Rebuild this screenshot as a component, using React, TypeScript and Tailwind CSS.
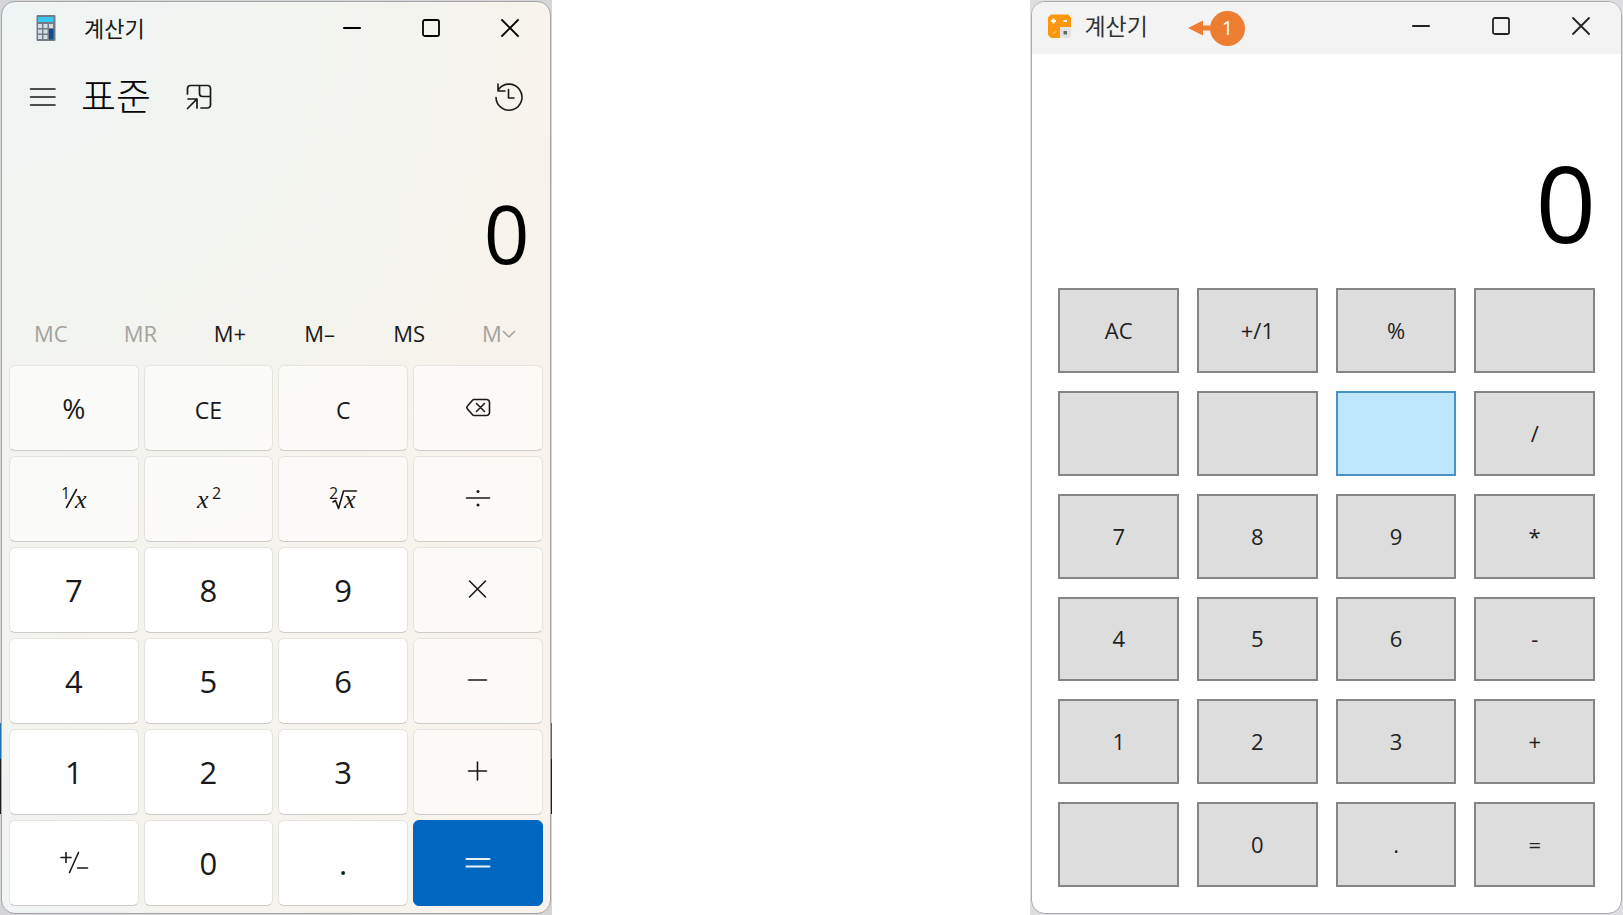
import type { ReactNode } from 'react';
import { clsx } from 'clsx';

interface Key {
  id: string;
  label: ReactNode;
  kind: 'number' | 'letter' | 'percent' | 'operator' | 'equals';
}

const stroke = {
  fill: 'none',
  stroke: 'currentColor',
  strokeWidth: 1.6,
  strokeLinecap: 'round',
  strokeLinejoin: 'round',
} as const;

function Glyph({ children }: { children: ReactNode }) {
  return (
    <svg viewBox="0 0 30 30" className="h-[30px] w-[30px] overflow-visible" aria-hidden="true" {...stroke}>
      {children}
    </svg>
  );
}

const digitClass = "fill-current stroke-none font-['Open_Sans',sans-serif] text-[16px]";
const variableClass = "fill-current stroke-none font-['Liberation_Serif',serif] text-[26px] italic";

const standardKeys: Key[] = [
  { id: 'percent', label: '%', kind: 'percent' },
  { id: 'clear-entry', label: 'CE', kind: 'letter' },
  { id: 'clear', label: 'C', kind: 'letter' },
  {
    id: 'backspace',
    kind: 'operator',
    label: (
      <Glyph>
        <path d="M11 6.500h12.500a3 3 0 0 1 3 3v10a3 3 0 0 1-3 3H11a2 2 0 0 1-1.500-.7L4.300 15.700a1.800 1.800 0 0 1 0-2.400L9.500 7.200A2 2 0 0 1 11 6.500zM13.500 10.500l8 8M21.500 10.500l-8 8" />
      </Glyph>
    ),
  },
  {
    id: 'reciprocal',
    kind: 'operator',
    label: (
      <Glyph>
        <text x="2" y="15" className={digitClass}>1</text>
        <path d="M7.500 23.500L17.500 5.500" />
        <text x="16" y="24" className={variableClass}>x</text>
      </Glyph>
    ),
  },
  {
    id: 'square',
    kind: 'operator',
    label: (
      <Glyph>
        <text x="4" y="24" className={variableClass}>x</text>
        <text x="19" y="15" className={digitClass}>2</text>
      </Glyph>
    ),
  },
  {
    id: 'square-root',
    kind: 'operator',
    label: (
      <Glyph>
        <text x="1" y="15" className={digitClass}>2</text>
        <path d="M5 18l2.500-1.500L10.500 24.500L15.500 7H28.500" />
        <text x="16" y="24" className={variableClass}>x</text>
      </Glyph>
    ),
  },
  {
    id: 'divide',
    kind: 'operator',
    label: (
      <Glyph>
        <path d="M3.500 14h23" />
        <circle cx="15" cy="7.500" r="1.500" fill="currentColor" stroke="none" />
        <circle cx="15" cy="21" r="1.500" fill="currentColor" stroke="none" />
      </Glyph>
    ),
  },
  { id: '7', label: '7', kind: 'number' },
  { id: '8', label: '8', kind: 'number' },
  { id: '9', label: '9', kind: 'number' },
  {
    id: 'multiply',
    kind: 'operator',
    label: <Glyph><path d="M6.500 6l16 16M22.500 6l-16 16" /></Glyph>,
  },
  { id: '4', label: '4', kind: 'number' },
  { id: '5', label: '5', kind: 'number' },
  { id: '6', label: '6', kind: 'number' },
  {
    id: 'minus',
    kind: 'operator',
    label: <Glyph><path d="M5.500 14h18" /></Glyph>,
  },
  { id: '1', label: '1', kind: 'number' },
  { id: '2', label: '2', kind: 'number' },
  { id: '3', label: '3', kind: 'number' },
  {
    id: 'plus',
    kind: 'operator',
    label: <Glyph><path d="M5.500 14h18M14.500 5v18" /></Glyph>,
  },
  {
    id: 'negate',
    kind: 'number',
    label: <Glyph><path d="M2 8.500h10M7 3.500v10M10.500 23.500L19.500 3.500M18.500 19h10" /></Glyph>,
  },
  { id: '0', label: '0', kind: 'number' },
  { id: 'decimal', label: '.', kind: 'number' },
  {
    id: 'equals',
    kind: 'equals',
    label: <Glyph><path d="M3.500 11h23M3.500 18.500h23" strokeWidth="2" /></Glyph>,
  },
];

const memoryKeys = [
  { label: 'MC', disabled: true },
  { label: 'MR', disabled: true },
  { label: 'M+', disabled: false },
  { label: 'M–', disabled: false },
  { label: 'MS', disabled: false },
];

const simpleKeys = [
  ['AC', '+/1', '%', ''],
  ['', '', '', '/'],
  ['7', '8', '9', '*'],
  ['4', '5', '6', '-'],
  ['1', '2', '3', '+'],
  ['', '0', '.', '='],
];

function WindowControls({ className }: { className: string }) {
  return (
    <div className={clsx('grid grid-cols-3 self-stretch', className)}>
      <button type="button" aria-label="최소화" className="flex items-center justify-center">
        <svg viewBox="0 0 18 18" className="h-[18px] w-[18px]" {...stroke}>
          <path d="M.8 9h16.400" strokeWidth="1.800" />
        </svg>
      </button>
      <button type="button" aria-label="최대화" className="flex items-center justify-center">
        <svg viewBox="0 0 18 18" className="h-[18px] w-[18px]" {...stroke}>
          <rect x="1" y="1" width="16" height="16" rx="1.800" strokeWidth="1.800" />
        </svg>
      </button>
      <button type="button" aria-label="닫기" className="flex items-center justify-center">
        <svg viewBox="0 0 18 18" className="h-[18px] w-[18px]" {...stroke}>
          <path d="M1 1l16 16M17 1L1 17" strokeWidth="1.800" />
        </svg>
      </button>
    </div>
  );
}

function CalculatorLogo() {
  return (
    <svg viewBox="0 0 20 26" className="h-[26px] w-5 shrink-0" aria-hidden="true">
      <rect x=".5" width="19" height="26" rx="1" fill="#737c86" />
      <rect x="2" y="2" width="15.500" height="5" fill="#35c8f4" />
      <g fill="#d5dce3">
        <rect x="2" y="9" width="4" height="4" />
        <rect x="7.500" y="9" width="4" height="4" />
        <rect x="13" y="9" width="4" height="4" />
        <rect x="2" y="14.500" width="4" height="4" />
        <rect x="7.500" y="14.500" width="4" height="4" />
        <rect x="2" y="20" width="4" height="4" />
        <rect x="7.500" y="20" width="4" height="4" />
      </g>
      <rect x="13" y="14" width="4.500" height="10.500" fill="#134a94" />
    </svg>
  );
}

function OrangeLogo() {
  return (
    <svg viewBox="0 0 25 25" className="h-[25px] w-[25px] shrink-0" aria-hidden="true">
      <path d="M4 .5h17l3 3V13H13v11H4l-3-3V3.500z" fill="#fb960d" />
      <path d="M13 13h11v8.500L21.500 24H13z" fill="#e2e2e2" />
      <path d="M4 7h5M6.500 4.500v5M16.500 7h3.500" stroke="#fff" strokeWidth="2" />
      <path d="M6 20l3.500-3.500" stroke="#ffb858" strokeWidth="1.600" />
      <path d="M16.500 17h3.500v3.500h-3.500z" fill="#666" />
    </svg>
  );
}

function StandardKey({ id, label, kind }: Key) {
  return (
    <button
      type="button"
      aria-label={id}
      className={clsx(
        'flex items-center justify-center rounded-md border',
        kind === 'equals'
          ? 'border-[#0067c0] bg-[#0067c0] text-[#e6f1fa]'
          : 'border-[#e6e3df] border-b-[#cdcbc7] text-[#191919]',
        kind === 'number' && 'bg-white pt-px text-[31px]',
        kind === 'letter' && 'bg-white/60 pt-1 text-[23px]',
        kind === 'percent' && 'bg-white/60 text-[28px]',
        kind === 'operator' && 'bg-white/60',
      )}
    >
      {label}
    </button>
  );
}

function StandardCalculator() {
  return (
    <div className="flex bg-[linear-gradient(#d5d5d8_0%,#d5d5d8_79%,#2272b2_79%,#2272b2_83%,#1c1c1e_83%,#1c1c1e_89%,#d5d5d8_89%)] p-px">
      <section
        aria-label="표준 계산기"
        className="flex flex-1 flex-col rounded-[14px] border border-[#a6a6a9] bg-[radial-gradient(circle_at_0%_0%,#eff4f4_0%,#f2f4ef_30%,transparent_55%),radial-gradient(circle_at_0%_100%,#eff4f5_0%,transparent_15%),linear-gradient(90deg,#f3f3ef,#f5f3ed_50%,#f8f2ec)]"
      >
        <header className="flex h-[52px] items-center pl-[34px]">
          <CalculatorLogo />
          <h1 className="ml-7 flex-1 text-[22px] leading-8 text-[#191919]">계산기</h1>
          <WindowControls className="w-[237px]" />
        </header>

        <nav className="flex h-[85px] items-center pr-[26px] pl-[27px] text-[#191919]">
          <button type="button" aria-label="탐색 열기">
            <svg viewBox="0 0 28 28" className="h-7 w-7" {...stroke}>
              <path d="M1.500 6h24.500M1.500 14h24.500M1.500 22h24.500" />
            </svg>
          </button>
          <h2 className="ml-6 pb-1 text-[38px] leading-10 font-light text-black">표준</h2>
          <button type="button" aria-label="항상 위에 유지" className="ml-[34px] flex-none">
            <svg viewBox="0 0 28 28" className="h-7 w-7" {...stroke} strokeWidth="1.700">
              <path d="M2.500 11V5.500a3 3 0 0 1 3-3h17a3 3 0 0 1 3 3V22a3 3 0 0 1-3 3H16M14.500 2.500v8a3 3 0 0 0 3 3h8M3 16h9v9M12 16l-9.500 9.500" />
            </svg>
          </button>
          <button type="button" aria-label="기록" className="ml-auto">
            <svg viewBox="0 0 30 30" className="h-[30px] w-[30px]" {...stroke}>
              <path d="M2 15.500A13 13 0 1 0 4.500 7.500M4 2v7h7M14.500 7.500V16h5.500" />
            </svg>
          </button>
        </nav>

        <output className="flex h-[175px] items-center justify-end pt-3 pr-5 text-[80px] leading-none text-black">
          0
        </output>

        <div className="grid h-[51px] grid-cols-6 items-center pr-1.5 pb-3 pl-1 text-[22px]">
          {memoryKeys.map((key) => (
            <button
              key={key.label}
              type="button"
              disabled={key.disabled}
              className={key.disabled ? 'text-[#a3a3a0]' : 'text-[#191919]'}
            >
              {key.label}
            </button>
          ))}
          <button type="button" disabled className="flex items-center justify-center text-[#a3a3a0]">
            M
            <svg viewBox="0 0 14 10" className="h-[10px] w-[14px]" aria-hidden="true" {...stroke}>
              <path d="M1.500 2.500L7 8l5.500-5.500" />
            </svg>
          </button>
        </div>

        <div className="grid flex-1 grid-cols-4 grid-rows-6 gap-[5px] px-[7px] pb-[7px]">
          {standardKeys.map((key) => (
            <StandardKey key={key.id} {...key} />
          ))}
        </div>
      </section>
    </div>
  );
}

function SimpleCalculator() {
  return (
    <div className="flex bg-[#dedee0] p-px">
      <section
        aria-label="계산기"
        className="flex flex-1 flex-col overflow-hidden rounded-[14px] border border-[#ababab] bg-white"
      >
        <header className="flex h-[52px] items-center bg-[#f3f3f3] pb-1 pl-[15px]">
          <OrangeLogo />
          <h1 className="ml-3 text-[23px] text-[#333]">계산기</h1>
          {/* Callout pointing at the window title */}
          <div className="ml-10 flex items-center pt-1">
            <svg viewBox="0 0 22 16" className="h-4 w-[22px]" fill="#ed7d31" aria-hidden="true">
              <path d="M0 8L15 .5v5h7v5h-7v5z" />
            </svg>
            <span className="flex h-[35px] w-[35px] items-center justify-center rounded-full bg-[#ed7d31] text-[20px] text-white">
              1
            </span>
          </div>
          <div className="ml-auto flex self-stretch text-[#222]">
            <WindowControls className="w-60" />
          </div>
        </header>

        <output className="flex h-[234px] items-center justify-end pt-[62px] pr-[25px] text-[106px] leading-none text-black">
          0
        </output>

        <div className="grid flex-1 grid-cols-4 grid-rows-6 gap-[18px] px-[26px] pb-[26px]">
          {simpleKeys.flat().map((label, index) => (
            <button
              key={index}
              type="button"
              aria-label={label || '빈 단추'}
              className={clsx(
                'border-2 text-[22px] text-[#222]',
                index === 6 ? 'border-[#4a92c6] bg-[#bee6fd]' : 'border-[#858585] bg-[#ddd]',
              )}
            >
              {label}
            </button>
          ))}
        </div>
      </section>
    </div>
  );
}

export default function App() {
  return (
    <main className="grid min-h-screen grid-cols-[552fr_593fr] gap-x-[29.5%] bg-white font-['Open_Sans','Noto_Sans_CJK_KR',sans-serif]">
      <StandardCalculator />
      <SimpleCalculator />
    </main>
  );
}
